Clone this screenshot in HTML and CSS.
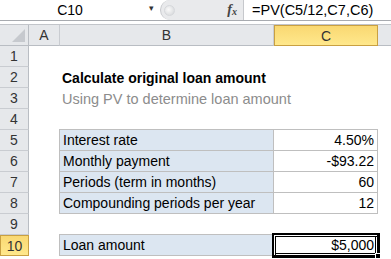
FILE: index.html
```html
<!DOCTYPE html>
<html lang="en">
<head>
  <meta charset="UTF-8" />
  <title>Calculate original loan amount</title>
  <link rel="stylesheet" href="styles.css">
</head>
<body>
  <div id="main">
    <div class="formula-bar">
      <div class="name-box">
        <span class="cell-ref">C10</span>
        <span class="drop">&#9662;</span>
      </div>
      <div class="bar-mid">
        <span class="grip"></span>
        <span class="fx">f<sub>x</sub></span>
      </div>
      <div class="formula">=PV(C5/12,C7,C6)</div>
    </div>
    <div class="bar-gap"></div>

    <div class="sheet">
      <div class="row head-row">
        <div class="rh corner"><span class="tri"></span></div>
        <div class="ch col-a">A</div>
        <div class="ch col-b">B</div>
        <div class="ch col-c sel">C</div>
        <div class="ch col-d"></div>
      </div>

      <div class="row">
        <div class="rh">1</div>
        <div class="cell col-a"></div><div class="cell col-b"></div><div class="cell col-c"></div>
      </div>
      <div class="row">
        <div class="rh">2</div>
        <div class="cell col-a"></div><div class="cell col-b title">Calculate original loan amount</div><div class="cell col-c"></div>
      </div>
      <div class="row">
        <div class="rh">3</div>
        <div class="cell col-a"></div><div class="cell col-b sub">Using PV to determine loan amount</div><div class="cell col-c"></div>
      </div>
      <div class="row">
        <div class="rh">4</div>
        <div class="cell col-a"></div><div class="cell col-b edge"></div><div class="cell col-c edge"></div>
      </div>
      <div class="row">
        <div class="rh">5</div>
        <div class="cell col-a"></div><div class="cell col-b label">Interest rate</div><div class="cell col-c val">4.50%</div>
      </div>
      <div class="row">
        <div class="rh">6</div>
        <div class="cell col-a"></div><div class="cell col-b label">Monthly payment</div><div class="cell col-c val">-$93.22</div>
      </div>
      <div class="row">
        <div class="rh">7</div>
        <div class="cell col-a"></div><div class="cell col-b label">Periods (term in months)</div><div class="cell col-c val">60</div>
      </div>
      <div class="row">
        <div class="rh">8</div>
        <div class="cell col-a"></div><div class="cell col-b label">Compounding periods per year</div><div class="cell col-c val">12</div>
      </div>
      <div class="row">
        <div class="rh">9</div>
        <div class="cell col-a"></div><div class="cell col-b edge"></div><div class="cell col-c edge"></div>
      </div>
      <div class="row">
        <div class="rh sel">10</div>
        <div class="cell col-a"></div><div class="cell col-b label">Loan amount</div><div class="cell col-c val active">$5,000<span class="handle"></span></div>
      </div>
    </div>
  </div>
</body>
</html>
```

FILE: styles.css
```css
*{
  margin:0;
  padding:0;
  box-sizing: border-box;
}
html,body{
  height:100%;
  width:100%;
}
body {
  font-family: "Liberation Sans", Arial, sans-serif;
  font-size: 14px;
  color: #000;
  background: #fff;
  overflow: hidden;
}

/* formula bar */
.formula-bar {
  display: flex;
  height: 21px;
  border-bottom: 1px solid #a8abb0;
}
.name-box {
  width: 160px;
  display: flex;
  align-items: center;
  position: relative;
}
.cell-ref {
  width: 100%;
  text-align: center;
  padding-right: 20px;
}
.drop {
  position: absolute;
  right: 6px;
  top: 3px;
  font-size: 9px;
  color: #333;
}
.bar-mid {
  width: 84px;
  background: #e9eaec;
  border-left: 1px solid #c6c8cc;
  border-radius: 10px 0 0 10px;
  display: flex;
  align-items: center;
  justify-content: space-between;
  padding: 0 4px 0 3px;
  border-right: 1px solid #c6c8cc;
}
.grip {
  width: 11px;
  height: 11px;
  border-radius: 50%;
  background: radial-gradient(circle at 40% 40%, #fafafa, #d2d4d7);
  border: 1px solid #d6d8db;
}
.fx {
  font-family: "Liberation Serif", serif;
  font-style: italic;
  font-weight: bold;
  font-size: 14px;
  color: #444;
  margin-right: 2px;
}
.fx sub {
  font-size: 10px;
  vertical-align: -1px;
}
.formula {
  flex: 1;
  padding-left: 8px;
  line-height: 21px;
  font-size: 14.5px;
}
.bar-gap {
  height: 4px;
  background: #fff;
  border-bottom: 1px solid #c2c5ca;
}

/* grid */
.row {
  display: flex;
  height: 21px;
}
.head-row {
  height: 21px;
}
.rh {
  width: 29px;
  flex: none;
  background: #e6e8eb;
  border-right: 1px solid #b9bdc3;
  border-bottom: 1px solid #c9ccd1;
  text-align: center;
  line-height: 21px;
  color: #333;
}
.corner {
  position: relative;
  border-bottom-color: #b9bdc3;
}
.tri {
  position: absolute;
  right: 3px;
  bottom: 3px;
  width: 0;
  height: 0;
  border-left: 13px solid transparent;
  border-bottom: 13px solid #c6c9ce;
}
.ch {
  background: #e6e8eb;
  border-right: 1px solid #c9ccd1;
  border-bottom: 1px solid #b9bdc3;
  text-align: center;
  line-height: 20px;
  color: #333;
}
.head-row .col-a { width: 31px; }
.head-row .col-b { width: 214px; }
.head-row .col-c { width: 104px; }
.col-d { flex: 1; border-right: none; }

.sel {
  background: linear-gradient(#f9d872, #ffe88c);
  border: 1px solid #c9a042;
  color: #333;
}
.rh.sel {
  border-right-color: #c9a042;
}

.cell {
  flex: none;
  line-height: 22px;
  white-space: nowrap;
}
.cell.col-a { width: 30px; }
.cell.col-b { width: 215px; padding-left: 3px; }
.cell.col-c { width: 104px; padding-right: 3px; }

.title {
  font-weight: bold;
  font-size: 14px;
}
.sub {
  color: #8c8c8c;
  font-size: 14.5px;
}
.edge {
  border-bottom: 1px solid #bfbfbf;
}
.label {
  background: #dce6f1;
  border-left: 1px solid #bfbfbf;
  border-right: 1px solid #bfbfbf;
  border-bottom: 1px solid #bfbfbf;
  line-height: 20px;
}
.val {
  text-align: right;
  border-right: 1px solid #bfbfbf;
  border-bottom: 1px solid #bfbfbf;
  line-height: 20px;
}
.active {
  position: relative;
  outline: 2px solid #000;
  box-shadow: inset 1px 1px 0 #fff, inset 2px 2px 0 #000, inset -1px -1px 0 #fff, inset -2px -2px 0 #000;
  border-color: #000;
}
.handle {
  position: absolute;
  right: -4px;
  bottom: -4px;
  width: 6px;
  height: 6px;
  background: #000;
  border: 1px solid #fff;
}
```
